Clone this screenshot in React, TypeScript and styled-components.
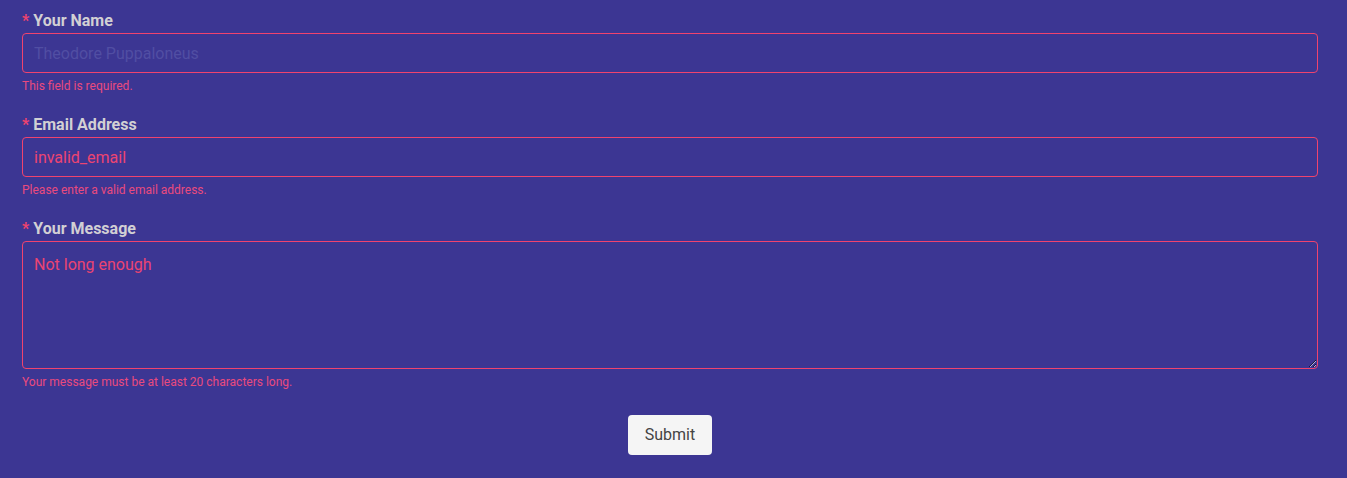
import styled, { createGlobalStyle } from "styled-components";

const GlobalStyle = createGlobalStyle`
  * { box-sizing: border-box; }
  body {
    margin: 0;
    background: #3c3693;
    font-family: Roboto, "Noto Sans", sans-serif;
  }
`;

const fields = [
  {
    id: "name",
    label: "Your Name",
    value: "",
    placeholder: "Theodore Puppaloneus",
    error: "This field is required.",
    multiline: false,
  },
  {
    id: "email",
    label: "Email Address",
    value: "invalid_email",
    placeholder: "",
    error: "Please enter a valid email address.",
    multiline: false,
  },
  {
    id: "message",
    label: "Your Message",
    value: "Not long enough",
    placeholder: "",
    error: "Your message must be at least 20 characters long.",
    multiline: true,
  },
];

function App() {
  return (
    <>
      <GlobalStyle />
      <Form onSubmit={(e) => e.preventDefault()}>
        {fields.map((f) => (
          <Field key={f.id}>
            <Label htmlFor={f.id}>
              <Star>*</Star> {f.label}
            </Label>
            {f.multiline ? (
              <TextArea id={f.id} defaultValue={f.value} $invalid />
            ) : (
              <Input
                id={f.id}
                defaultValue={f.value}
                placeholder={f.placeholder}
                $invalid
              />
            )}
            <ErrorText>{f.error}</ErrorText>
          </Field>
        ))}
        <Actions>
          <SubmitButton type="submit">Submit</SubmitButton>
        </Actions>
      </Form>
    </>
  );
}

const Form = styled.form`
  display: flex;
  flex-direction: column;
  gap: 21px;
  padding: 10px 29px 23px 22px;
`;

const Field = styled.div`
  display: flex;
  flex-direction: column;
`;

const Label = styled.label`
  font-size: 16px;
  font-weight: 700;
  line-height: 20px;
  color: #d2d0d4;
  padding-top: 1px;
  margin-bottom: 2px;
`;

const Star = styled.span`
  color: #f0436e;
`;

const Input = styled.input<{ $invalid?: boolean }>`
  height: 40px;
  width: 100%;
  padding: 0 11px;
  border: 1px solid ${(p) => (p.$invalid ? "#f0436e" : "#8b74d9")};
  border-radius: 4px;
  background: transparent;
  color: #ec4471;
  font-family: Roboto, "Noto Sans", sans-serif;
  font-size: 16px;
  outline: none;

  &::placeholder {
    color: #514ea3;
  }
`;

const TextArea = styled.textarea<{ $invalid?: boolean }>`
  height: 128px;
  width: 100%;
  padding: 12px 11px;
  border: 1px solid ${(p) => (p.$invalid ? "#f0436e" : "#8b74d9")};
  border-radius: 4px;
  background: transparent;
  color: #ec4471;
  font-family: Roboto, "Noto Sans", sans-serif;
  font-size: 16px;
  line-height: 22px;
  outline: none;
  display: block;
`;

const ErrorText = styled.div`
  margin-top: 6px;
  font-size: 12px;
  line-height: 14px;
  color: #ea4a7d;
`;

const Actions = styled.div`
  display: flex;
  justify-content: center;
  padding-top: 5px;
`;

const SubmitButton = styled.button`
  height: 40px;
  width: 84px;
  padding: 0 0 2px;
  border: none;
  border-radius: 4px;
  background: #f5f5f5;
  color: #444;
  font-family: Roboto, "Noto Sans", sans-serif;
  font-size: 16px;
  cursor: pointer;
`;

export default App;
